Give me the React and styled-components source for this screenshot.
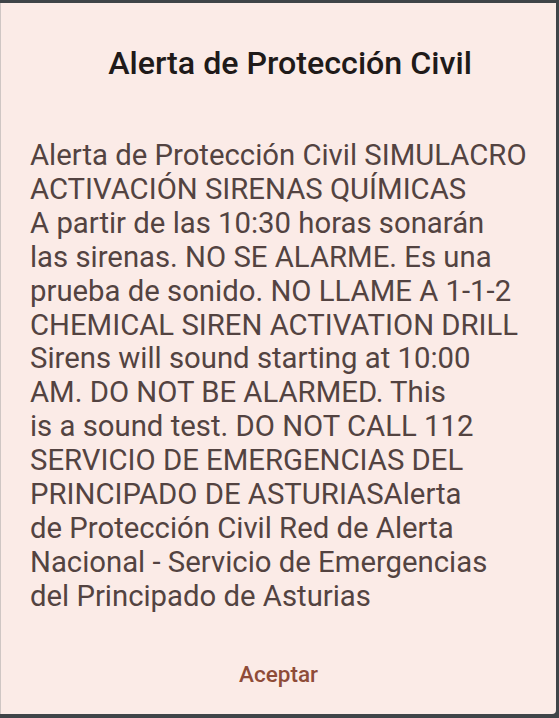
import React from 'react';
import styled, { createGlobalStyle } from "styled-components";

const GlobalStyle = createGlobalStyle`
  html, body {
    margin: 0;
    padding: 0;
    height: 100%;
    background: #3f4448;
  }
  #root {
    height: 100%;
  }
`;

const lines = [
  "Alerta de Protección Civil SIMULACRO",
  "ACTIVACIÓN SIRENAS QUÍMICAS",
  "A partir de las 10:30 horas sonarán",
  "las sirenas. NO SE ALARME. Es una",
  "prueba de sonido. NO LLAME A 1-1-2",
  "CHEMICAL SIREN ACTIVATION DRILL",
  "Sirens will sound starting at 10:00",
  "AM. DO NOT BE ALARMED. This",
  "is a sound test. DO NOT CALL 112",
  "SERVICIO DE EMERGENCIAS DEL",
  "PRINCIPADO DE ASTURIASAlerta",
  "de Protección Civil Red de Alerta",
  "Nacional - Servicio de Emergencias",
  "del Principado de Asturias",
];

export default () => {
  return (
    <>
      <GlobalStyle />
      <Screen>
        <Dialog>
          <Title>Alerta de Protección Civil</Title>
          <Message>
            {lines.map((l, i) => <Line key={i}>{l}</Line>)}
          </Message>
          <Actions>
            <TextButton>Aceptar</TextButton>
          </Actions>
        </Dialog>
      </Screen>
    </>
  );
}

const Screen = styled.div`
  height: 100%;
  box-sizing: border-box;
  padding: 3px 3px 4px 0;
  display: flex;
`;

const Dialog = styled.div`
  flex: 1;
  display: flex;
  flex-direction: column;
  background: #fbebe7;
  border-left: 1px solid #cfc6c4;
  border-radius: 0 0 4px 0;
  font-family: Roboto, "Noto Sans", sans-serif;
`;

const Title = styled.h1`
  margin: 0;
  padding: 42px 0 0 23px;
  text-align: center;
  font-size: 32.2px;
  font-weight: 500;
  line-height: 36px;
  color: #201a19;
`;

const Message = styled.div`
  padding: 58px 0 0 29px;
  font-size: 29.3px;
  line-height: 33.9px;
  color: #534341;
  flex: 1;
`;

const Line = styled.div`
  white-space: nowrap;
`;

const Actions = styled.div`
  display: flex;
  justify-content: center;
  padding-bottom: 26px;
`;

const TextButton = styled.button`
  background: none;
  border: none;
  padding: 0 8px;
  font-family: Roboto, "Noto Sans", sans-serif;
  font-size: 22.5px;
  font-weight: 500;
  color: #8f4c38;
  line-height: 28px;
`;
